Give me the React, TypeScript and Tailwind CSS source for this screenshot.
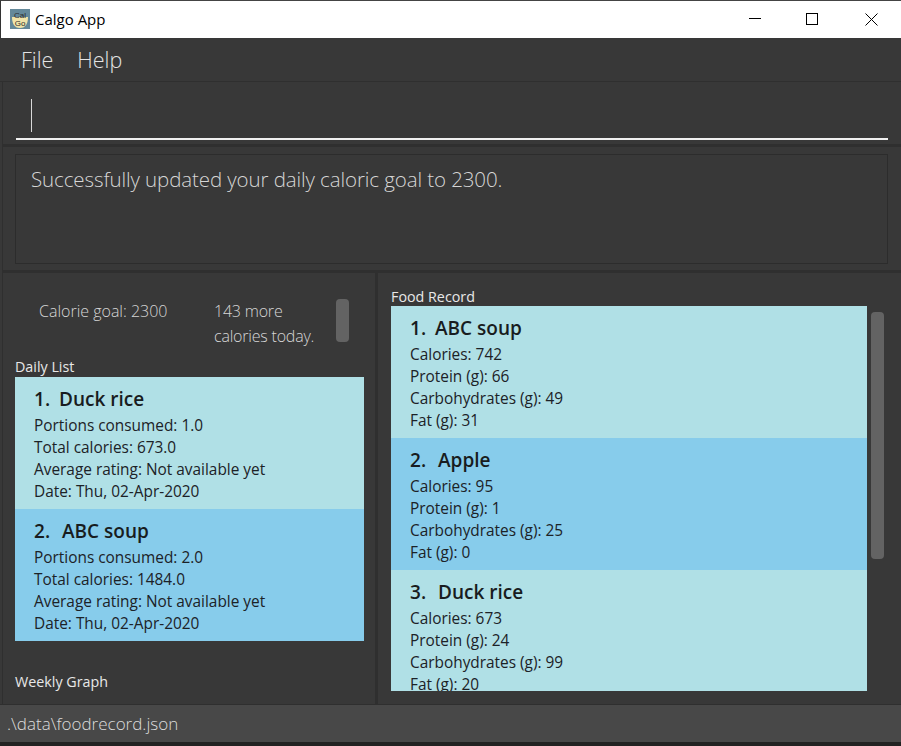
import React from "react";

const sans = "font-['Open_Sans','Noto_Sans',sans-serif]";

function Card({ idx, name, lines, alt }: { idx: number; name: string; lines: string[]; alt?: boolean }) {
  return (
    <div className={`${alt ? "bg-[#87cceb]" : "bg-[#b0e0e6]"} h-[132px] shrink-0 pl-[19px] pt-[9px] text-[#1c2227] overflow-hidden`}>
      <div className="flex h-[26px] whitespace-pre text-[19px] font-semibold leading-[26px] text-[#181c20]">
        <span className={idx === 1 ? "w-[25px]" : "w-[28px]"}>{idx}.</span>
        <span>{name}</span>
      </div>
      <div className="mt-[3px] text-[15.4px] leading-[22px]">
        {lines.map((l) => (
          <div key={l} className="h-[22px] whitespace-nowrap">{l}</div>
        ))}
      </div>
    </div>
  );
}

export default function App() {
  return (
    <div className={`${sans} flex h-[746px] w-[901px] flex-col overflow-hidden bg-[#383838]`}>
      {/* Title bar */}
      <div className="flex h-[38px] shrink-0 items-center border-l border-t border-l-[#333] border-t-[#444] bg-white">
        <svg width="20" height="20" viewBox="0 0 20 20" className="ml-[9px] mt-[-1px]">
          <rect width="20" height="20" fill="#64899a" />
          <path d="M2 8 H18 C18 14 16 19 10 19 C4 19 2 14 2 8Z" fill="#f0e4a8" />
          <text x="10" y="8.5" textAnchor="middle" fontSize="8" fill="#2b2b2b" fontFamily="Liberation Sans, sans-serif">Cal</text>
          <text x="10" y="16.5" textAnchor="middle" fontSize="8" fill="#2b2b2b" fontFamily="Liberation Sans, sans-serif">Go</text>
        </svg>
        <span className="ml-[5px] text-[15px] leading-none text-black">Calgo App</span>
        <div className="ml-auto flex items-center">
          <svg width="14" height="14" viewBox="0 0 14 14" className="mr-[44px] mt-[-1px]"><path d="M1 6.5H13" stroke="#000" strokeWidth="1" /></svg>
          <svg width="14" height="14" viewBox="0 0 14 14" className="mr-[45px]"><rect x="0.5" y="0.5" width="11" height="11" fill="none" stroke="#000" /></svg>
          <svg width="14" height="14" viewBox="0 0 14 14" className="mr-[22px]"><path d="M0.5 0.5L12.5 12.5M12.5 0.5L0.5 12.5" stroke="#000" strokeWidth="1" /></svg>
        </div>
      </div>

      {/* Menu */}
      <div className="flex h-[44px] shrink-0 items-center gap-[24px] border-b border-[#2f2f2f] pl-[21px] text-[21.5px] font-light leading-none text-[#e4e4e4]">
        <span>File</span>
        <span>Help</span>
      </div>

      {/* Command box */}
      <div className="ml-[2px] h-[65px] shrink-0 border-b-[3px] border-l border-[#2f2f2f] pl-[13px] pr-[13px]">
        <div className="flex h-[58px] items-center border-b-2 border-[#f0f0f0] pl-[15px] pt-[10px]">
          <div className="h-[33px] w-[1px] bg-[#d8d8d8]" />
        </div>
      </div>

      {/* Result */}
      <div className="ml-[2px] h-[126px] shrink-0 border-b-[3px] border-l border-[#2f2f2f] pl-[12px] pr-[12px] pt-[7px]">
        <div className="h-[110px] w-[873px] border border-[#2c2c2c] pl-[15px] pt-[6px] text-[20.5px] font-light leading-[36px] tracking-[-0.1px] text-[#d6d6d6]">
          Successfully updated your daily caloric goal to 2300.
        </div>
      </div>

      {/* Split */}
      <div className="flex min-h-0 flex-1">
        <div className="ml-[2px] flex w-[376px] shrink-0 flex-col border-l border-r-[3px] border-[#2f2f2f] pl-[12px]">
          <div className="flex h-[85px] shrink-0 text-[16px] font-light leading-[25px] text-[#d6d6d6]">
            <div className="ml-[24px] mt-[26px] w-[175px] whitespace-nowrap">Calorie goal: 2300</div>
            <div className="mt-[26px] w-[122px] whitespace-nowrap tracking-[-0.2px]">143 more<br />calories today.</div>
            <div className="mt-[26px] h-[43px] w-[13px] rounded-[4px] bg-[#636363]" />
          </div>
          <div className="h-[19px] shrink-0 text-[14.3px] leading-[17px] text-[#e8e8e8]">Daily List</div>
          <div className="w-[349px] shrink-0">
            <Card idx={1} name="Duck rice" lines={["Portions consumed: 1.0", "Total calories: 673.0", "Average rating: Not available yet", "Date: Thu, 02-Apr-2020"]} />
            <Card idx={2} name="ABC soup" alt lines={["Portions consumed: 2.0", "Total calories: 1484.0", "Average rating: Not available yet", "Date: Thu, 02-Apr-2020"]} />
          </div>
          <div className="mt-[31px] text-[14.3px] leading-[20px] text-[#e8e8e8]">Weekly Graph</div>
        </div>

        <div className="flex min-w-0 flex-1 flex-col pl-[13px]">
          <div className="mt-[14px] h-[19px] shrink-0 text-[14.3px] leading-[19px] text-[#e8e8e8]">Food Record</div>
          <div className="flex">
            <div className="flex h-[385px] w-[476px] shrink-0 flex-col overflow-hidden">
              <Card idx={1} name="ABC soup" lines={["Calories: 742", "Protein (g): 66", "Carbohydrates (g): 49", "Fat (g): 31"]} />
              <Card idx={2} name="Apple" alt lines={["Calories: 95", "Protein (g): 1", "Carbohydrates (g): 25", "Fat (g): 0"]} />
              <Card idx={3} name="Duck rice" lines={["Calories: 673", "Protein (g): 24", "Carbohydrates (g): 99", "Fat (g): 20"]} />
            </div>
            <div className="ml-[4px] mt-[6px] h-[247px] w-[13px] rounded-[4px] bg-[#636363]" />
          </div>
        </div>
      </div>

      {/* Status */}
      <div className="flex h-[38px] shrink-0 items-center border-t border-[#2f2f2f] bg-[#484848] pl-[7px] text-[17px] font-light text-[#dcdcdc]">
        .\data\foodrecord.json
      </div>
      <div className="h-[4px] shrink-0 bg-[#222]" />
    </div>
  );
}
